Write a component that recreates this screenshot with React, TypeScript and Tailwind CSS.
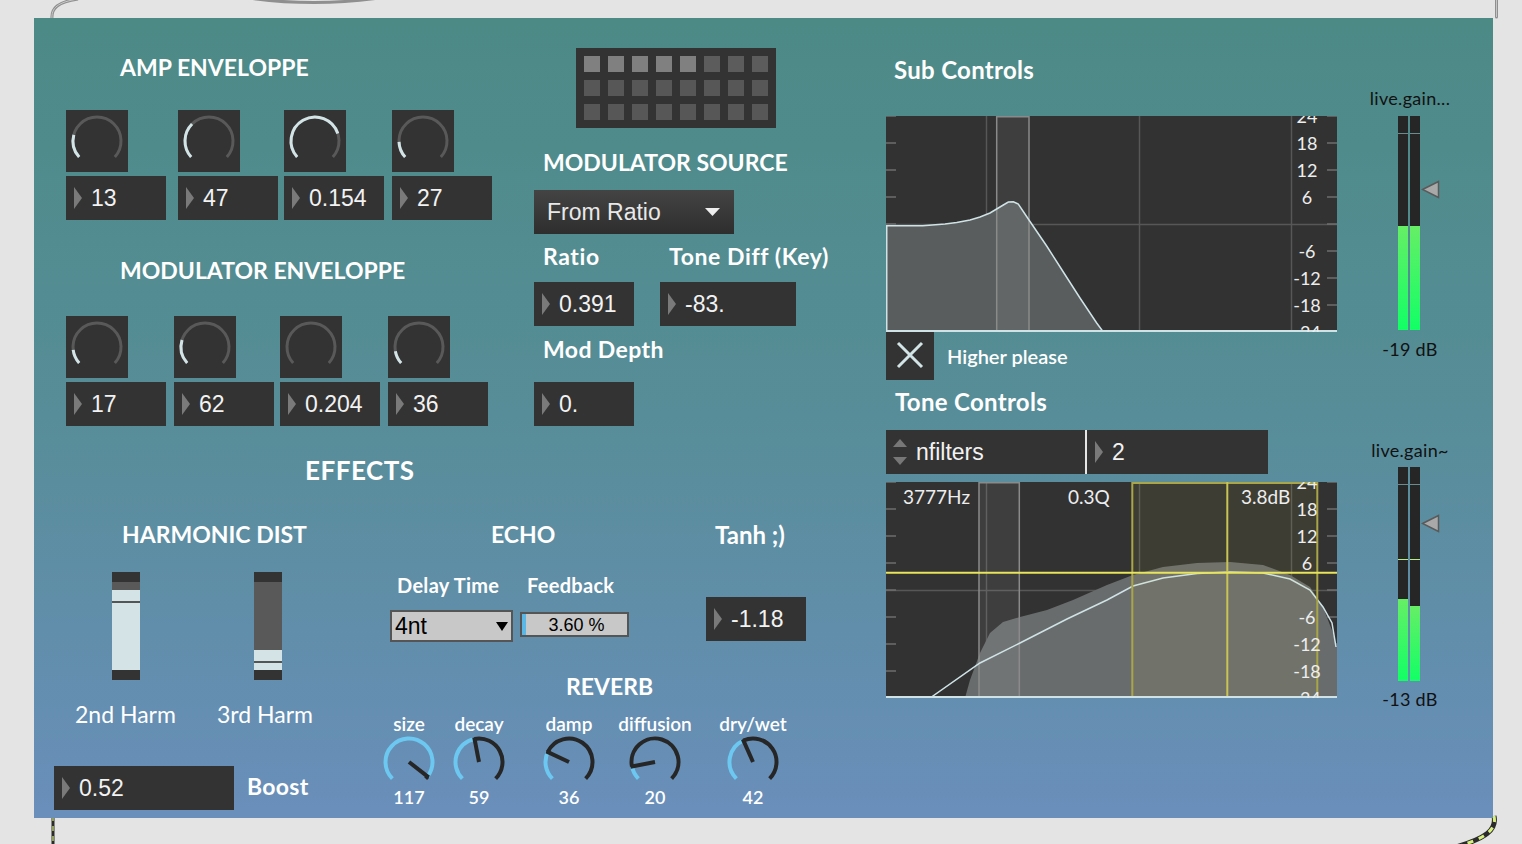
import React from 'react';

const NUM = "font-['Liberation_Sans',Arial,sans-serif]";

const rad = (a: number) => (a * Math.PI) / 180;
const pt = (cx: number, cy: number, r: number, a: number) =>
  `${(cx + r * Math.sin(rad(a))).toFixed(2)} ${(cy - r * Math.cos(rad(a))).toFixed(2)}`;
const arcPath = (cx: number, cy: number, r: number, a1: number, a2: number) =>
  a2 - a1 < 0.5 ? '' : `M ${pt(cx, cy, r, a1)} A ${r} ${r} 0 ${a2 - a1 > 180 ? 1 : 0} 1 ${pt(cx, cy, r, a2)}`;

function Heading({ children, className = '', size = 'text-[23px]' }: { children: React.ReactNode; className?: string; size?: string }) {
  return <div className={`${size} font-bold leading-none text-white whitespace-nowrap ${className}`}>{children}</div>;
}

function Triangle() {
  return (
    <svg width="8" height="22" className="shrink-0 block">
      <polygon points="0,0 8,11 0,22" fill="#7a7a7a" />
    </svg>
  );
}

function NumBox({ value, className = '' }: { value: string; className?: string }) {
  return (
    <div className={`flex items-center h-[44px] bg-[#333] ${className}`}>
      <div className="ml-[8px]">
        <Triangle />
      </div>
      <span className={`${NUM} ml-[9px] text-[23px] leading-none text-[#f2f2f2]`}>{value}</span>
    </div>
  );
}

function Dial({ end }: { end: number }) {
  return (
    <div className="w-[62px] h-[62px] bg-[#333]">
      <svg width="62" height="62" className="block">
        <path d={arcPath(31, 31, 24, -132, 132)} stroke="#595959" strokeWidth="3" fill="none" />
        <path d={arcPath(31, 31, 24, -132, end)} stroke="#d3e4e7" strokeWidth="3" fill="none" />
      </svg>
    </div>
  );
}

function EnvColumn({ dial, value, className = '' }: { dial: number; value: string; className?: string }) {
  return (
    <div className={`flex flex-col gap-[4px] w-[100px] ${className}`}>
      <Dial end={dial} />
      <NumBox value={value} className="w-[100px]" />
    </div>
  );
}

function Matrix({ className = '' }: { className?: string }) {
  const cells = Array.from({ length: 24 }, (_, i) => (i < 5 ? 'bg-[#808080]' : i < 8 ? 'bg-[#5c5c5c]' : 'bg-[#575757]'));
  return (
    <div className={`w-[200px] h-[80px] bg-[#333] p-[8px] grid grid-cols-[repeat(8,16px)] grid-rows-[repeat(3,16px)] gap-[8px] ${className}`}>
      {cells.map((c, i) => (
        <div key={i} className={`w-[16px] h-[16px] ${c}`} />
      ))}
    </div>
  );
}

function HSlider({ top, light }: { top: string; light: string }) {
  return (
    <div className="w-[28px] h-[108px] flex flex-col">
      <div className="h-[10px] bg-[#333]" />
      <div className={`${top} bg-[#595959]`} />
      <div className={`${light} bg-[#d3e3e6] flex flex-col`}>
        <div className="h-[11px]" />
        <div className="h-[2px] bg-[#555]" />
      </div>
      <div className="h-[10px] bg-[#333]" />
    </div>
  );
}

function RevDial({ label, value, angle, className = '' }: { label: string; value: string; angle: number; className?: string }) {
  const [x2, y2] = pt(31, 28, 25, angle).split(' ');
  return (
    <div className={`flex flex-col items-center w-[62px] ${className}`}>
      <span className="text-[19px] font-semibold leading-none text-white whitespace-nowrap">{label}</span>
      <svg width="62" height="56" className="block mt-[1px]">
        <path d={arcPath(31, 28, 23.5, -135, angle)} stroke="#6cc8f0" strokeWidth="4" fill="none" />
        <path d={arcPath(31, 28, 23.5, angle, 135)} stroke="#262626" strokeWidth="4" fill="none" />
        <line x1="31" y1="28" x2={x2} y2={y2} stroke="#262626" strokeWidth="4" />
      </svg>
      <span className="-mt-[2px] text-[18px] font-semibold leading-none text-white">{value}</span>
    </div>
  );
}

const ticksY = [0, 27, 54, 81, 108, 135, 162, 189, 216];
const dbLabels = ['24', '18', '12', '6', '', '-6', '-12', '-18', '-24'];

function GraphGrid() {
  return (
    <>
      {[100.5, 253.5, 405.5].map((x) => (
        <line key={x} x1={x} y1="0" x2={x} y2="216" stroke="#575757" strokeWidth="1.5" />
      ))}
      <line x1="0" y1="108.5" x2="451" y2="108.5" stroke="#575757" strokeWidth="1.5" />
      {ticksY.map((y) => (
        <g key={y}>
          <line x1="0" y1={y} x2="10" y2={y} stroke="#6e6e6e" strokeWidth="1.5" />
          <line x1="441" y1={y} x2="451" y2={y} stroke="#6e6e6e" strokeWidth="1.5" />
        </g>
      ))}
    </>
  );
}

function DbLabels() {
  return (
    <>
      {dbLabels.map((l, i) =>
        l ? (
          <text key={i} x="421" y={ticksY[i]} fontFamily="Lato, sans-serif" fontSize="18" fill="#ededed" textAnchor="middle" dominantBaseline="central">
            {l}
          </text>
        ) : null
      )}
    </>
  );
}

function SubGraph({ className = '' }: { className?: string }) {
  const curve =
    'M0,109.7 L36.7,109.7 L59,108 L70.7,106.5 L84,104 L94,101 L104,97 L117.3,89 L122.3,86 L127.3,85.7 L132.3,88 L142.3,103 L160.7,130 L177.3,156 L194,182 L210.7,207 L217.3,216';
  return (
    <svg width="451" height="216" className={`block bg-[#323232] ${className}`}>
      <GraphGrid />
      <path d={`${curve} L0,216 Z`} fill="#5a5d5e" />
      <rect x="110.7" y="0.75" width="32.3" height="214.5" fill="rgba(255,255,255,0.06)" stroke="#8a8a8a" strokeWidth="1.5" />
      <path d={curve} stroke="#cfe3e6" strokeWidth="1.5" fill="none" />
      <line x1="0.75" y1="109.7" x2="0.75" y2="216" stroke="#cfe3e6" strokeWidth="1.5" />
      <line x1="0" y1="215" x2="451" y2="215" stroke="#cfe3e6" strokeWidth="2" />
      <DbLabels />
    </svg>
  );
}

function ToneGraph({ className = '' }: { className?: string }) {
  const spectrum =
    'M79,216 L84,198 L94,171 L104,151 L117,140 L134,135 L161,128 L187,118 L221,103 L247,93 L277,85 L311,81 L344,80 L377,83 L404,93 L424,105 L437,125 L447,151 L451,165 L451,216 Z';
  const line =
    'M44,216 L94,181 L134,161 L181,137 L221,118 L247,104 L277,96 L311,91.5 L344,90 L377,91 L404,97 L424,108 L437,125 L446,141 L450,165';
  return (
    <svg width="451" height="216" className={`block bg-[#323232] ${className}`}>
      <GraphGrid />
      <path d={spectrum} fill="#696c6d" />
      <rect x="93" y="0.75" width="40.3" height="214.5" fill="rgba(255,255,255,0.06)" stroke="#8a8a8a" strokeWidth="1.5" />
      <path d={line} stroke="#cfe3e6" strokeWidth="1.5" fill="none" />
      <rect x="246.3" y="1" width="185" height="214" fill="rgba(225,215,90,0.07)" stroke="#aaa548" strokeWidth="2" />
      <line x1="341.3" y1="0" x2="341.3" y2="216" stroke="#c9c456" strokeWidth="2" />
      <line x1="0" y1="90.7" x2="451" y2="90.7" stroke="#e8e45c" strokeWidth="2" />
      <line x1="0" y1="215" x2="451" y2="215" stroke="#cfe3e6" strokeWidth="2" />
      <DbLabels />
      <text x="17" y="22" fontFamily="Lato, sans-serif" fontSize="19" fill="#ededed">3777Hz</text>
      <text x="182" y="22" fontFamily="Lato, sans-serif" fontSize="19" fill="#ededed">0.3Q</text>
      <text x="355" y="22" fontFamily="Lato, sans-serif" fontSize="19" fill="#ededed">3.8dB</text>
    </svg>
  );
}

function MeterBar({ green, warn = false }: { green: string; warn?: boolean }) {
  return (
    <div className="w-[10px] h-[214px] bg-[#262626] flex flex-col">
      <div className="h-[17px]" />
      <div className="h-[1px] bg-[#6b8c8e]" />
      {warn && (
        <>
          <div className="h-[74px]" />
          <div className="h-[1px] bg-[#b6ec86]" />
        </>
      )}
      <div className="flex-1" />
      <div className={`${green} bg-[linear-gradient(180deg,#66ee66,#12ff66)]`} />
    </div>
  );
}

function Meter({ className = '', left, right, pointer, warn = false }: { className?: string; left: string; right: string; pointer: string; warn?: boolean }) {
  return (
    <div className={`relative flex gap-[2px] mr-[2px] ${className}`}>
      <MeterBar green={left} warn={warn} />
      <MeterBar green={right} warn={warn} />
      <svg width="19" height="19" className={`absolute left-[23px] ${pointer}`}>
        <polygon points="1.5,9.5 17.5,1.5 17.5,17.5" fill="#a9a9a9" stroke="#5a5a5a" strokeWidth="1.5" />
      </svg>
    </div>
  );
}

function Cords() {
  return (
    <svg className="absolute inset-0 pointer-events-none" width="1522" height="844">
      <path d="M52 19 C51 8 58 2 78 -1" stroke="#8f8f8f" strokeWidth="3" fill="none" />
      <path d="M52 19 C51 8 58 2 78 -1" stroke="#cacaca" strokeWidth="1" fill="none" />
      <path d="M236 -4 Q314 9 392 -4" stroke="#8f8f8f" strokeWidth="3" fill="none" />
      <line x1="1496.5" y1="-2" x2="1496.5" y2="17" stroke="#8f8f8f" strokeWidth="3" strokeLinecap="round" />
      <line x1="1496.5" y1="-2" x2="1496.5" y2="17" stroke="#c6c6c6" strokeWidth="1" />
      <line x1="53" y1="816" x2="53" y2="846" stroke="#2b2b2b" strokeWidth="3" />
      <line x1="53" y1="816" x2="53" y2="846" stroke="#d4ee7c" strokeWidth="1.2" strokeDasharray="5 5" />
      <path d="M1494 816 C1497 830 1486 838 1456 847" stroke="#2b2b2b" strokeWidth="5" fill="none" />
      <path d="M1494 816 C1497 830 1486 838 1456 847" stroke="#d8f07c" strokeWidth="3" strokeDasharray="6 6" fill="none" />
    </svg>
  );
}

export default function App() {
  return (
    <div className="relative w-[1522px] h-[844px] overflow-hidden bg-[#e4e4e4] pl-[34px] pt-[18px] font-['Lato',sans-serif]">
      <Cords />
      <div className="relative w-[1459px] h-[800px] flex bg-[linear-gradient(180deg,#4c8a86_0%,#578d98_50%,#6a8fbb_100%)]">
        {/* left part */}
        <div className="w-[820px] flex flex-col">
          <div className="flex">
            {/* envelopes */}
            <div className="ml-[32px] w-[426px] flex flex-col">
              <Heading className="mt-[38px] ml-[54px]">AMP ENVELOPPE</Heading>
              <div className="mt-[31px] flex">
                <EnvColumn dial={-75} value="13" />
                <EnvColumn dial={-45} value="47" className="ml-[12px]" />
                <EnvColumn dial={72} value="0.154" className="ml-[6px]" />
                <EnvColumn dial={-92} value="27" className="ml-[8px]" />
              </div>
              <Heading className="mt-[39px] ml-[54px]">MODULATOR ENVELOPPE</Heading>
              <div className="mt-[34px] flex">
                <EnvColumn dial={-97} value="17" />
                <EnvColumn dial={-73} value="62" className="ml-[8px]" />
                <EnvColumn dial={-132} value="0.204" className="ml-[6px]" />
                <EnvColumn dial={-100} value="36" className="ml-[8px]" />
              </div>
            </div>
            {/* modulator source */}
            <div className="ml-[42px] flex flex-col">
              <Matrix className="mt-[30px] ml-[42px]" />
              <Heading className="mt-[23px] ml-[9px]">MODULATOR SOURCE</Heading>
              <div className="mt-[16px] w-[200px] h-[44px] flex items-center bg-[linear-gradient(180deg,#444,#2e2e2e)]">
                <span className={`${NUM} ml-[13px] text-[23px] leading-none text-[#e8e8e8]`}>From Ratio</span>
                <svg width="15" height="8" className="block ml-auto mr-[14px]">
                  <polygon points="0,0 15,0 7.5,8" fill="#eee" />
                </svg>
              </div>
              <div className="mt-[11px] flex text-[23px] tracking-[0.6px] font-bold leading-none text-white whitespace-nowrap">
                <span className="ml-[9px] w-[126px]">Ratio</span>
                <span>Tone Diff (Key)</span>
              </div>
              <div className="mt-[14px] flex gap-[26px]">
                <NumBox value="0.391" className="w-[100px]" />
                <NumBox value="-83." className="w-[136px]" />
              </div>
              <div className="mt-[12px] ml-[9px] text-[23px] tracking-[0.4px] font-bold leading-none text-white">Mod Depth</div>
              <NumBox value="0." className="mt-[21px] w-[100px]" />
            </div>
          </div>

          {/* effects */}
          <Heading className="mt-[31px] ml-[271px] tracking-[0.5px]" size="text-[26px]">EFFECTS</Heading>
          <div className="flex">
            {/* harmonic dist */}
            <div className="ml-[20px] w-[324px] flex flex-col">
              <Heading className="mt-[40px] ml-[68px]">HARMONIC DIST</Heading>
              <div className="mt-[26px] flex">
                <div className="ml-[58px]">
                  <HSlider top="h-[8px]" light="h-[80px]" />
                </div>
                <div className="ml-[114px]">
                  <HSlider top="h-[68px]" light="h-[20px]" />
                </div>
              </div>
              <div className="mt-[23px] flex text-[23px] leading-none text-white whitespace-nowrap">
                <span className="ml-[21px] w-[142px]">2nd Harm</span>
                <span>3rd Harm</span>
              </div>
              <div className="mt-[40px] flex items-center">
                <NumBox value="0.52" className="w-[180px]" />
                <span className="ml-[13px] -mt-[4px] text-[23px] tracking-[0.3px] font-bold leading-none text-white">Boost</span>
              </div>
            </div>
            {/* echo / tanh / reverb */}
            <div className="flex flex-col">
              <div className="flex">
                <div className="ml-[12px] w-[239px] flex flex-col">
                  <Heading className="mt-[40px] ml-[101px]">ECHO</Heading>
                  <div className="mt-[29px] flex text-[20px] tracking-[0.3px] font-bold leading-none text-white whitespace-nowrap">
                    <span className="ml-[7px] w-[130px]">Delay Time</span>
                    <span>Feedback</span>
                  </div>
                  <div className="mt-[15px] flex items-start gap-[7px]">
                    <div className="w-[123px] h-[32px] bg-[#c8c8c8] border-2 border-[#555] flex items-center">
                      <span className={`${NUM} ml-[3px] text-[23px] leading-none text-black`}>4nt</span>
                      <svg width="12" height="9" className="block ml-auto mr-[3px]">
                        <polygon points="0,0 12,0 6,9" fill="#000" />
                      </svg>
                    </div>
                    <div className="mt-[2px] w-[109px] h-[25px] bg-[#c8c8c8] border-2 border-[#555] flex items-stretch">
                      <div className="w-[4px] bg-[#5bb8e6]" />
                      <span className={`${NUM} flex-1 flex items-center justify-center text-[18px] leading-none text-black`}>3.60 %</span>
                    </div>
                  </div>
                </div>
                <div className="ml-[77px] flex flex-col">
                  <Heading className="mt-[40px] ml-[9px]" size="text-[24px]">Tanh ;)</Heading>
                  <NumBox value="-1.18" className="mt-[50px] w-[100px]" />
                </div>
              </div>
              <Heading className="mt-[33px] ml-[188px]">REVERB</Heading>
              <div className="mt-[16px] flex">
                <RevDial label="size" value="117" angle={128} />
                <RevDial label="decay" value="59" angle={-11} className="ml-[8px]" />
                <RevDial label="damp" value="36" angle={-65} className="ml-[28px]" />
                <RevDial label="diffusion" value="20" angle={-101} className="ml-[24px]" />
                <RevDial label="dry/wet" value="42" angle={-24} className="ml-[36px]" />
              </div>
            </div>
          </div>
        </div>

        {/* sub / tone controls */}
        <div className="ml-[32px] w-[451px] flex flex-col">
          <Heading className="mt-[40px] ml-[8px] tracking-[0.3px]" size="text-[24px]">Sub Controls</Heading>
          <SubGraph className="mt-[34px]" />
          <div className="flex items-center">
            <div className="w-[48px] h-[48px] bg-[#333]">
              <svg width="48" height="48" className="block">
                <path d="M12 11 L36 35 M36 11 L12 35" stroke="#d3e4e7" strokeWidth="3" />
              </svg>
            </div>
            <span className="ml-[13px] text-[20px] font-semibold leading-none text-white">Higher please</span>
          </div>
          <Heading className="mt-[10px] ml-[9px] tracking-[0.3px]" size="text-[24px]">Tone Controls</Heading>
          <div className="mt-[16px] w-[382px] h-[44px] flex bg-[#333]">
            <div className="w-[199px] flex items-center">
              <svg width="14" height="26" className="block ml-[7px]">
                <polygon points="0,8 7,0 14,8" fill="#777" />
                <polygon points="0,18 7,26 14,18" fill="#777" />
              </svg>
              <span className={`${NUM} ml-[9px] text-[23px] leading-none text-[#f2f2f2]`}>nfilters</span>
            </div>
            <div className="w-[2px] bg-[#e6e6e6]" />
            <NumBox value="2" className="flex-1" />
          </div>
          <ToneGraph className="mt-[8px]" />
        </div>

        {/* meters */}
        <div className="ml-[28px] w-[90px] flex flex-col items-center text-[18px] tracking-[0.3px] leading-none text-[#111] whitespace-nowrap">
          <span className="mt-[71px]">live.gain...</span>
          <Meter className="mt-[9px]" left="h-[104px]" right="h-[104px]" pointer="top-[64px]" />
          <span className="mt-[10px]">-19 dB</span>
          <span className="mt-[83px]">live.gain~</span>
          <Meter className="mt-[8px]" left="h-[82px]" right="h-[75px]" pointer="top-[47px]" warn />
          <span className="mt-[9px]">-13 dB</span>
        </div>
      </div>
    </div>
  );
}
